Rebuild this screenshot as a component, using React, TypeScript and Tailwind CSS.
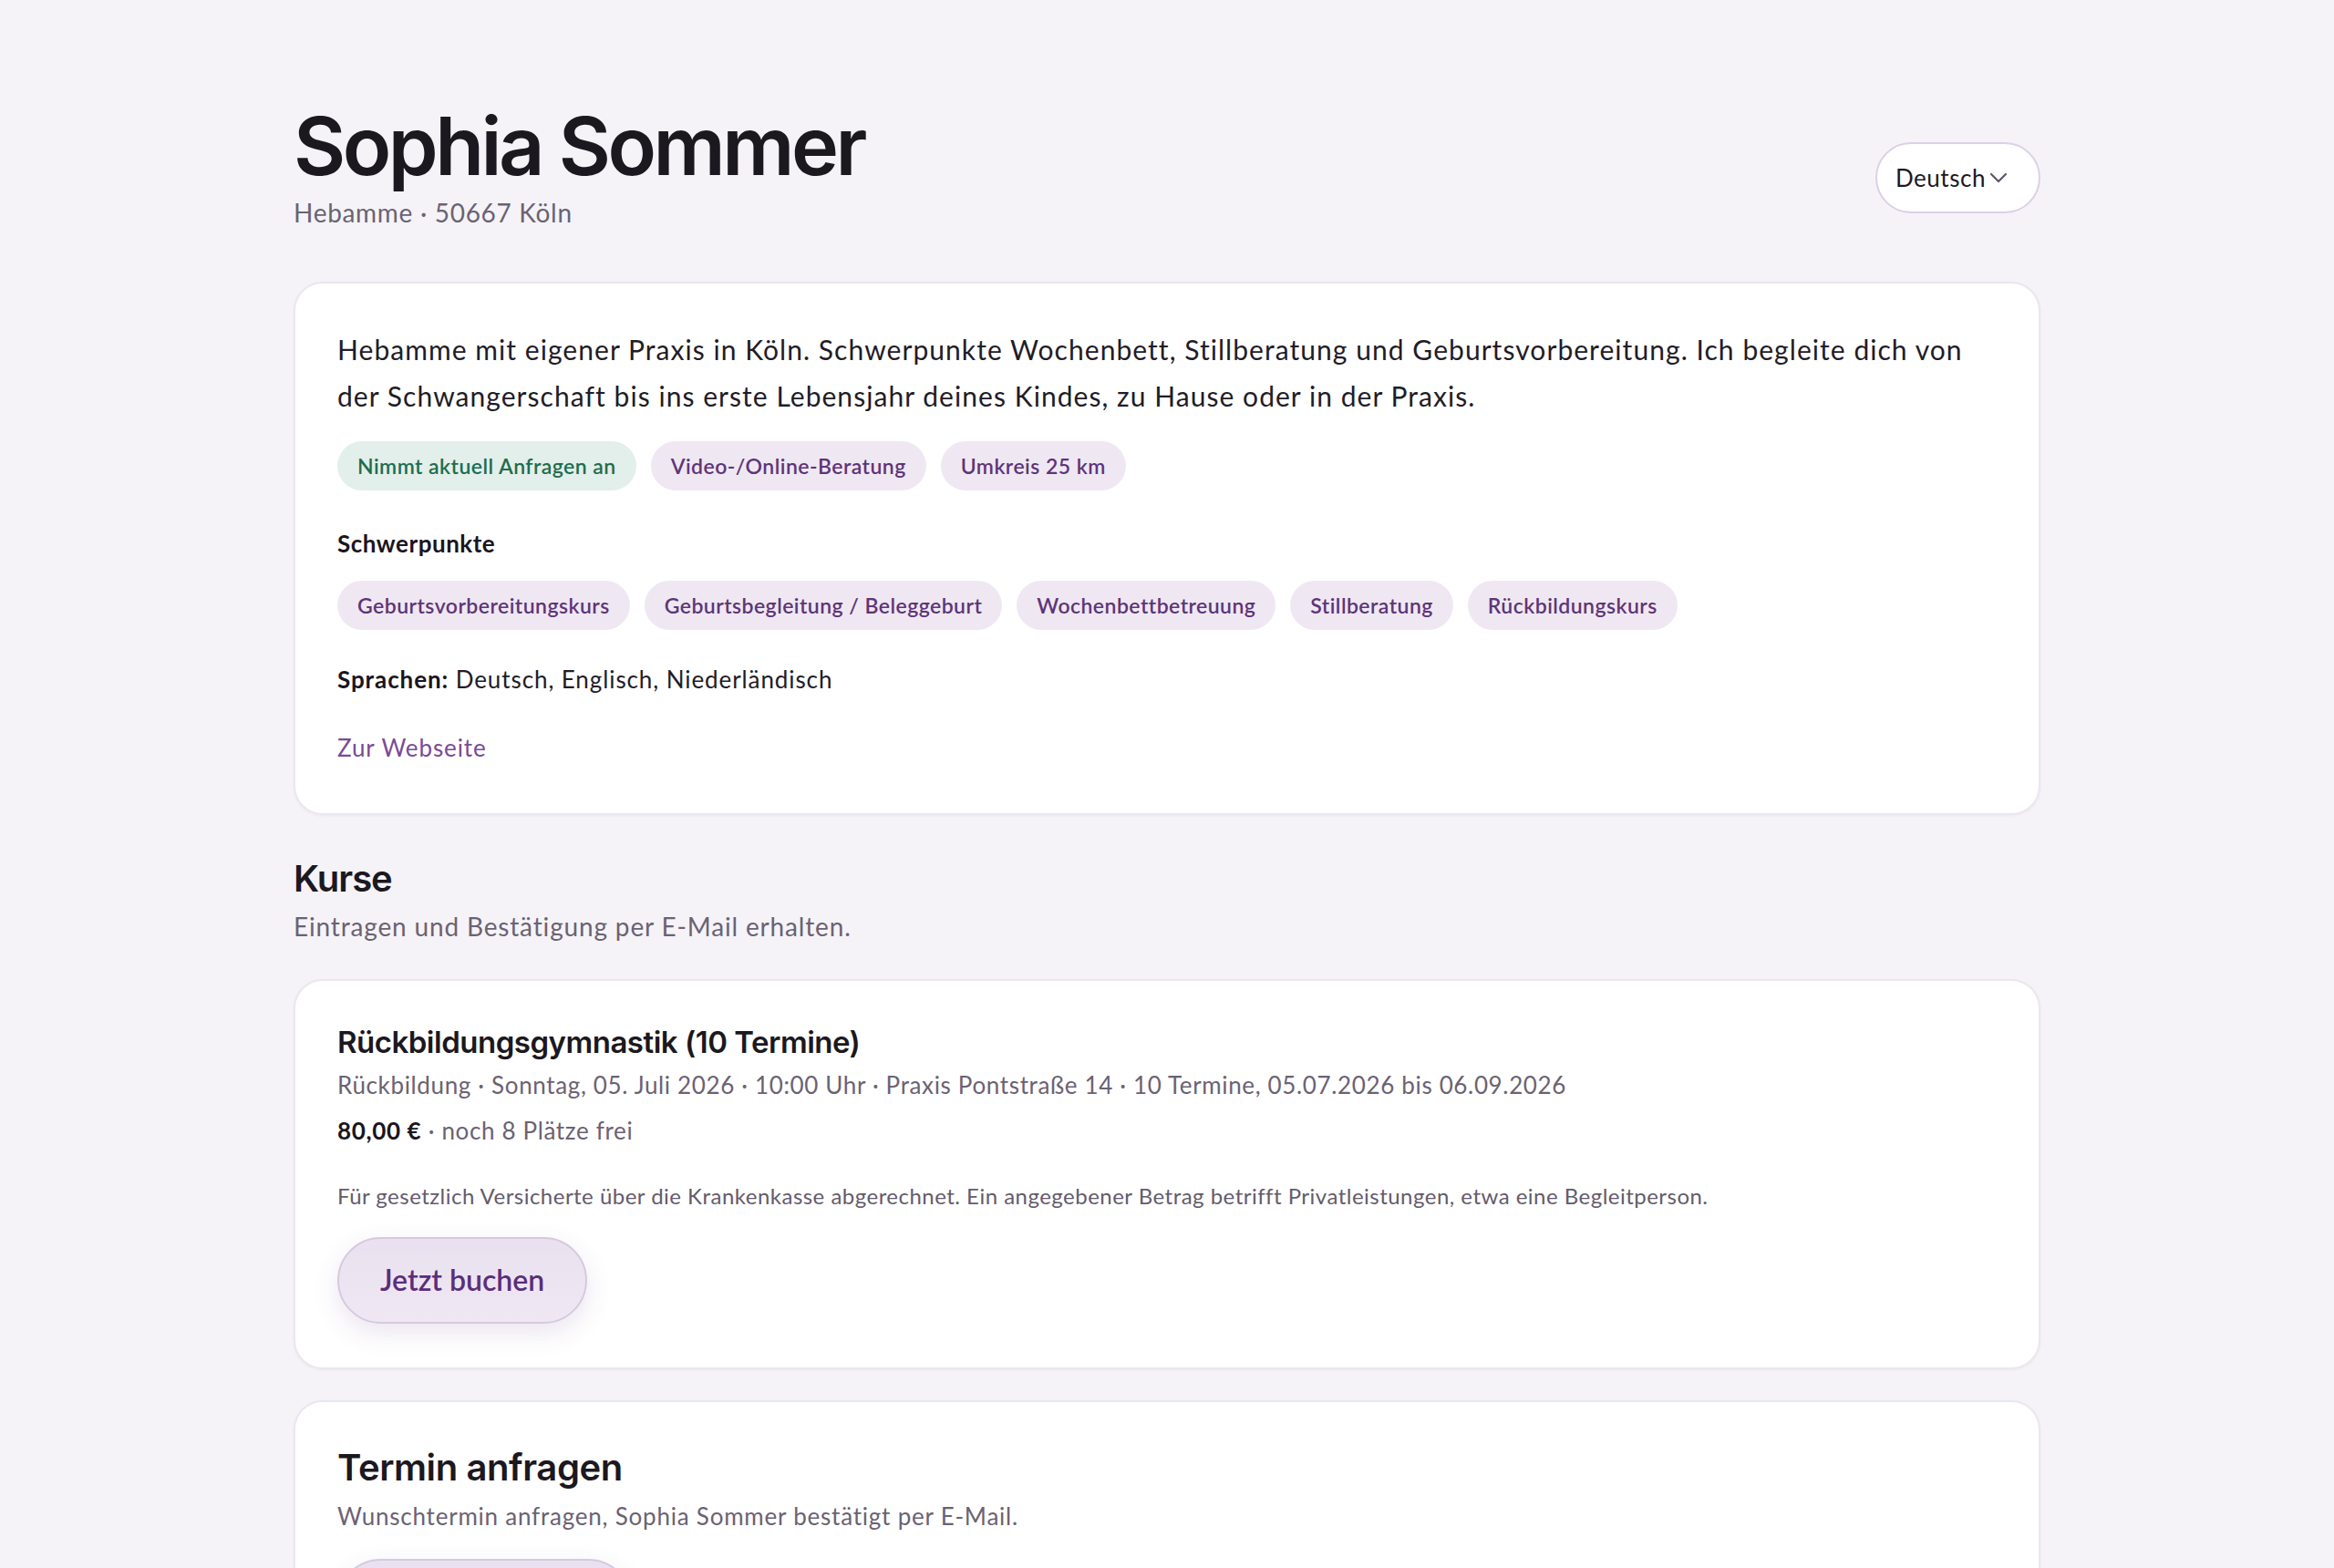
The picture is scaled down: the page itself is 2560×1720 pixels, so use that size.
import { ChevronDown } from 'lucide-react';

const badges = [
  { label: "Nimmt aktuell Anfragen an", tone: "green" },
  { label: "Video-/Online-Beratung", tone: "purple" },
  { label: "Umkreis 25 km", tone: "purple" },
];

const focus = [
  "Geburtsvorbereitungskurs",
  "Geburtsbegleitung / Beleggeburt",
  "Wochenbettbetreuung",
  "Stillberatung",
  "Rückbildungskurs",
];

const body = { fontFamily: "Lato, 'Noto Sans', sans-serif" };
const display = { fontFamily: "Inter, 'Liberation Sans', sans-serif" };

function Chip({ label, tone }: { label: string; tone: string }) {
  return (
    <span
      className={
        tone === "green"
          ? "inline-flex h-[54px] items-center rounded-full bg-[#e2efea] px-[22px] text-[23px] font-semibold tracking-[0.02em] text-[#1f6d4f]"
          : "inline-flex h-[54px] items-center rounded-full bg-[#efe8f2] px-[22px] text-[23px] font-semibold tracking-[0.02em] text-[#5e3579]"
      }
    >
      {label}
    </span>
  );
}

function PillButton({ children }: { children: string }) {
  return (
    <button className="flex h-[95px] items-center rounded-full border-2 border-[#d6c9df] bg-gradient-to-b from-[#e9e1ef] to-[#efe8f3] px-[45px] text-[32px] font-semibold text-[#5b2e7b] shadow-[0_10px_28px_rgba(110,70,140,0.14)]">
      {children}
    </button>
  );
}

export default function App() {
  return (
    <div className="min-h-screen bg-[#f5f3f7] text-[#1e1923]" style={body}>
      <div className="mx-auto w-[1916px] pt-[112px] pb-24">
        {/* Header */}
        <header className="flex items-center justify-between">
          <div>
            <h1 className="text-[88px] font-semibold leading-[1.1] tracking-[-0.04em] text-[#1c1820]" style={display}>
              Sophia Sommer
            </h1>
            <p className="mt-1 text-[28px] leading-[40px] tracking-[0.025em] text-[#6b6273]">Hebamme · 50667 Köln</p>
          </div>
          <button className="mt-[26px] flex h-[78px] w-[181px] items-center rounded-full border-2 border-[#ddd0e6] bg-white pl-[20px] text-[26px] tracking-[0.02em] text-[#1e1923]">
            Deutsch
            <ChevronDown className="-ml-[2px] h-[32px] w-[32px] text-[#5d5464]" strokeWidth={1.6} />
          </button>
        </header>

        {/* Profile card */}
        <section className="mt-[56px] rounded-[32px] border-2 border-[#ece6f0] bg-white px-[46px] pt-[47px] pb-[52px] shadow-[0_1px_3px_rgba(60,30,80,0.05)]">
          <p className="text-[30px] leading-[51px] tracking-[0.035em] text-[#221c27]">
            Hebamme mit eigener Praxis in Köln. Schwerpunkte Wochenbett, Stillberatung und Geburtsvorbereitung. Ich begleite dich von der Schwangerschaft bis ins erste Lebensjahr deines Kindes, zu Hause oder in der Praxis.
          </p>
          <div className="mt-6 flex flex-wrap gap-4">
            {badges.map((b) => (
              <Chip key={b.label} label={b.label} tone={b.tone} />
            ))}
          </div>

          <h3 className="mt-10 text-[26px] font-bold leading-[36px] tracking-[0.02em] text-[#1a1520]">Schwerpunkte</h3>
          <div className="mt-[23px] flex flex-wrap gap-4">
            {focus.map((f) => (
              <Chip key={f} label={f} tone="purple" />
            ))}
          </div>

          <p className="mt-[34px] text-[26px] leading-[40px] tracking-[0.035em] text-[#221c27]">
            <span className="font-bold text-[#1a1520]">Sprachen:</span> Deutsch, Englisch, Niederländisch
          </p>
          <a href="#" className="mt-[35px] block text-[26px] leading-[40px] tracking-[0.035em] text-[#7a4a97]">
            Zur Webseite
          </a>
        </section>

        {/* Courses */}
        <h2 className="mt-[46px] text-[40px] font-semibold leading-[48px] tracking-tight text-[#1c1820]" style={display}>
          Kurse
        </h2>
        <p className="mt-2 text-[28px] leading-[40px] tracking-[0.03em] text-[#6b6273]">Eintragen und Bestätigung per E-Mail erhalten.</p>

        <div className="mt-[38px] rounded-[32px] border-2 border-[#ece6f0] bg-white px-[46px] pt-[47px] pb-[48px] shadow-[0_1px_3px_rgba(60,30,80,0.05)]">
          <h3 className="text-[33px] font-semibold leading-[40px] tracking-[-0.015em] text-[#1c1820]" style={display}>
            Rückbildungsgymnastik (10 Termine)
          </h3>
          <p className="mt-2 text-[26px] leading-[38px] tracking-[0.025em] text-[#6b6273]">
            Rückbildung · Sonntag, 05. Juli 2026 · 10:00 Uhr · Praxis Pontstraße 14 · 10 Termine, 05.07.2026 bis 06.09.2026
          </p>
          <p className="mt-3 text-[26px] leading-[38px] tracking-[0.025em] text-[#6b6273]">
            <span className="font-bold text-[#1a1520]">80,00 €</span> · noch 8 Plätze frei
          </p>
          <p className="mt-[36px] text-[24px] leading-[34px] tracking-[0.02em] text-[#645b6b]">
            Für gesetzlich Versicherte über die Krankenkasse abgerechnet. Ein angegebener Betrag betrifft Privatleistungen, etwa eine Begleitperson.
          </p>
          <div className="mt-7 flex">
            <PillButton>Jetzt buchen</PillButton>
          </div>
        </div>

        {/* Request */}
        <div className="mt-[34px] rounded-[32px] border-2 border-[#ece6f0] bg-white px-[46px] pt-[48px] pb-[46px] shadow-[0_1px_3px_rgba(60,30,80,0.05)]">
          <h3 className="text-[40px] font-semibold leading-[48px] tracking-[-0.01em] text-[#1c1820]" style={display}>
            Termin anfragen
          </h3>
          <p className="mt-[10px] text-[26px] leading-[38px] tracking-[0.03em] text-[#6b6273]">
            Wunschtermin anfragen, Sophia Sommer bestätigt per E-Mail.
          </p>
          <div className="mt-7 flex">
            <PillButton>Termin anfragen</PillButton>
          </div>
        </div>
      </div>
    </div>
  );
}
